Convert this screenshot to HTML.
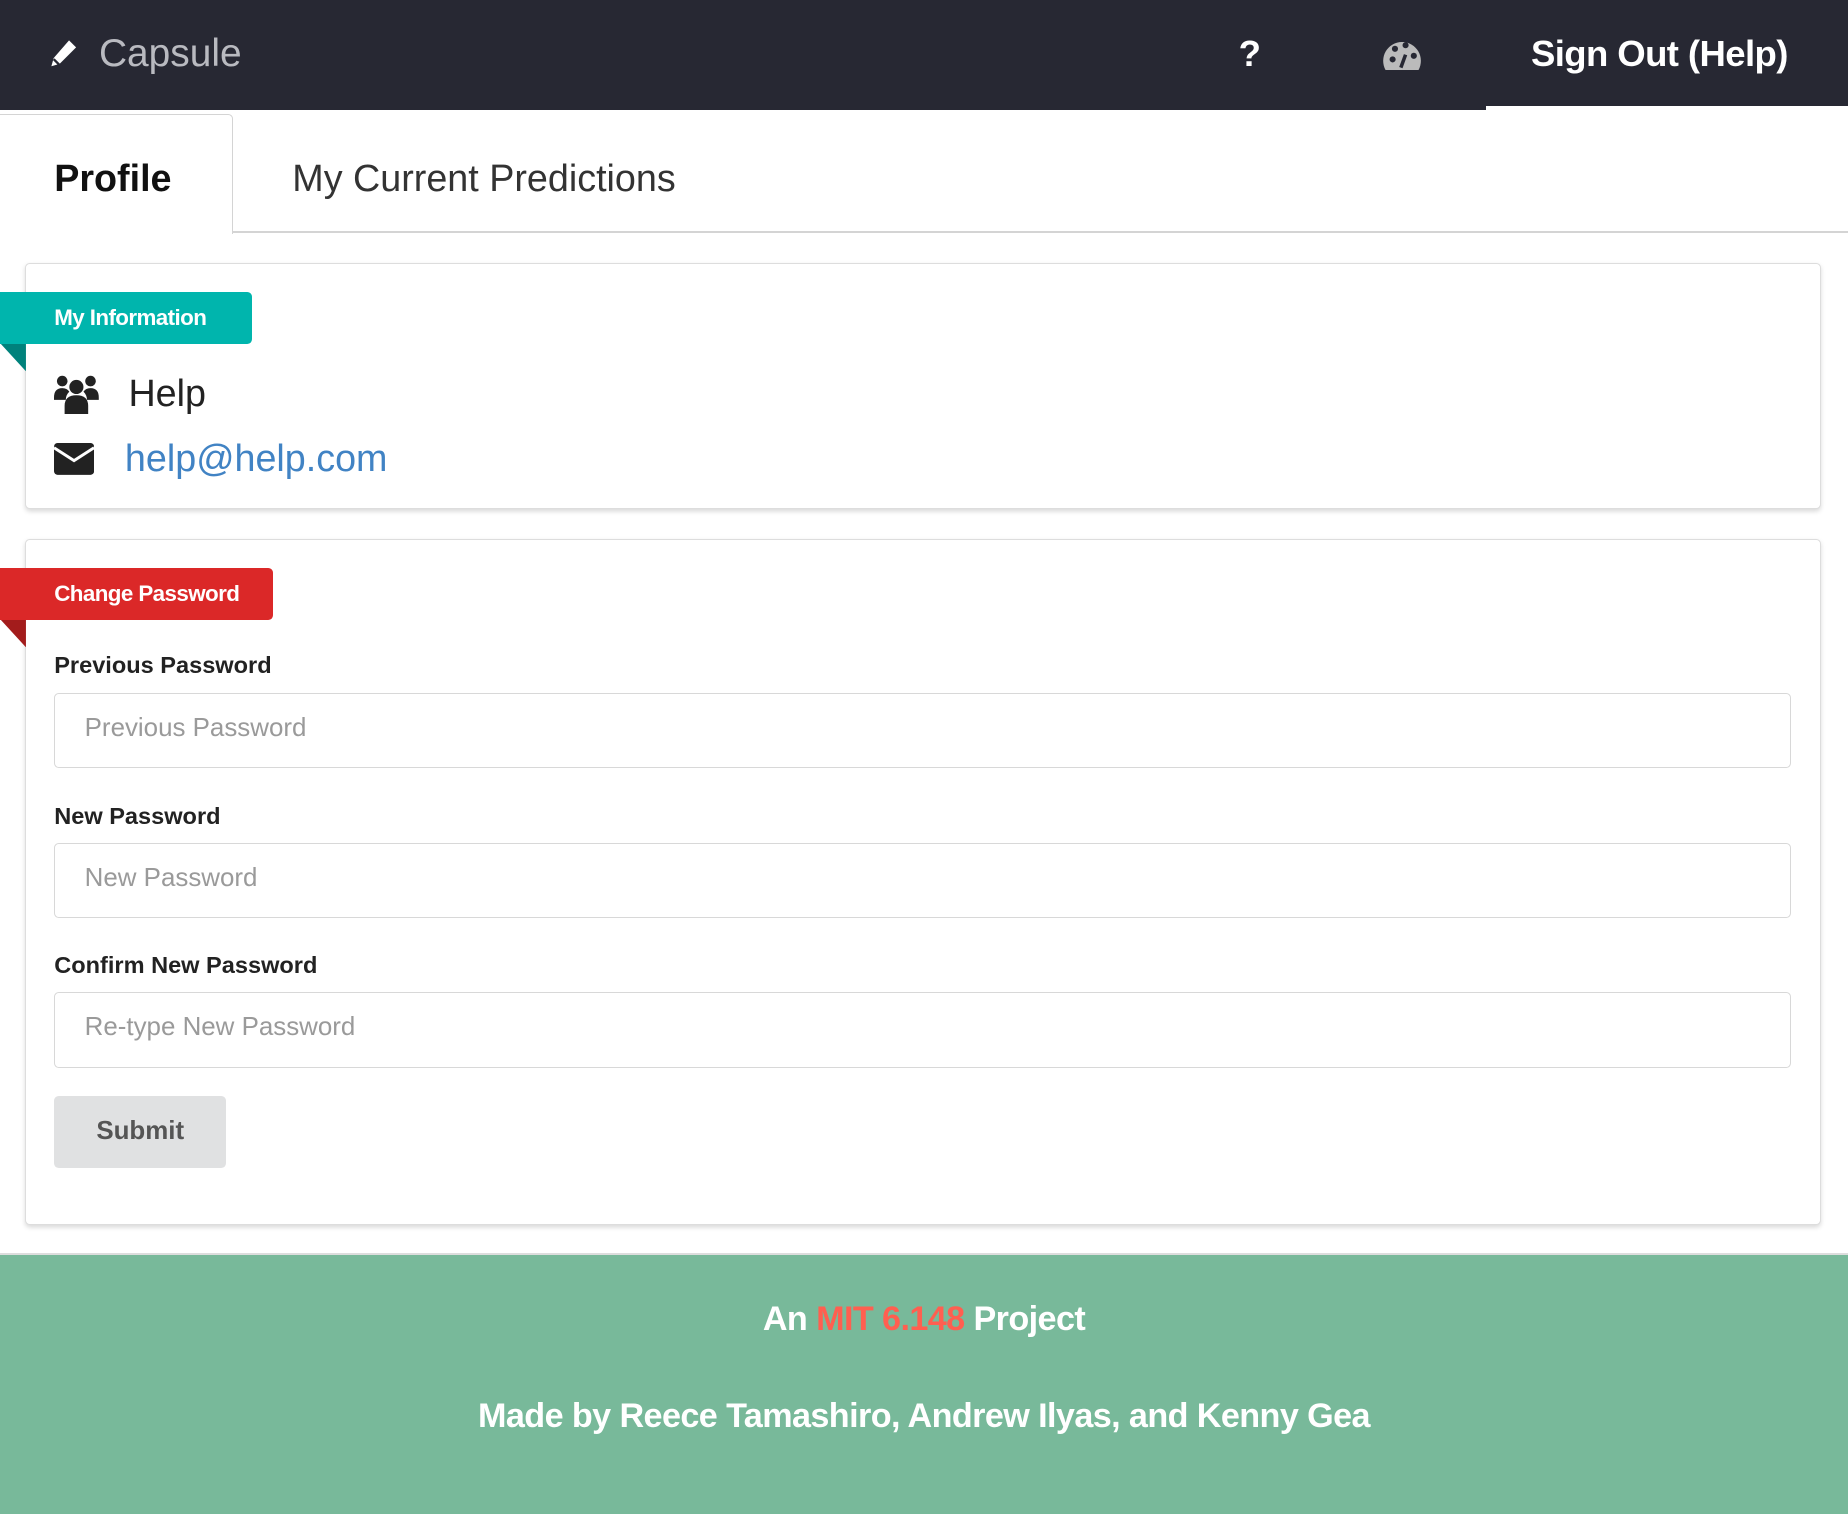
<!DOCTYPE html>
<html><head><meta charset="utf-8"><style>
html{zoom:1.17857}
body{margin:0;width:1568px;height:1285px;position:relative;background:#fff;font-family:"Liberation Sans",sans-serif;overflow:hidden;color:#222}
.a{position:absolute}
.nav{left:0;top:0;width:1568px;height:93px;background:#272833}
.lbl{font-weight:bold;font-size:20px;color:#222}
.inp{left:46px;border:1px solid #d8d8d8;border-radius:4px;box-sizing:border-box;width:1474px;height:64px}
.ph{position:absolute;left:25px;top:17px;font-size:22px;color:#9a9a9a}
.card{left:21px;width:1524px;border:1px solid #ddd;border-radius:4px;box-sizing:border-box;box-shadow:0 2px 4px rgba(0,0,0,.15);background:#fff}
</style></head><body>
<div class="a nav"></div>
<div class="a" style="left:1261px;top:90px;width:307px;height:5px;background:#fff"></div>
<svg class="a" style="left:42px;top:32px" width="26" height="28" viewBox="0 0 26 28"><path d="M17 2l6 6-14 14-7 2 2-7z" fill="#fff"/><path d="M4 18l5 5" stroke="#272833" stroke-width="2"/></svg>
<div class="a" style="left:84px;top:27px;font-size:33px;color:#b9bac0">Capsule</div>
<div class="a" style="left:1051px;top:28px;font-size:31px;font-weight:bold;color:#fff">?</div>
<svg class="a" style="left:1173px;top:31px" width="34" height="30" viewBox="0 0 34 30"><path d="M3 28A16 16 0 1 1 31 28Z" fill="#bbb"/><circle cx="9" cy="19" r="2.6" fill="#272833"/><circle cx="11" cy="10" r="2.6" fill="#272833"/><circle cx="20" cy="7" r="2.6" fill="#272833"/><circle cx="27" cy="16" r="2.6" fill="#272833"/><path d="M16 26l4-11" stroke="#272833" stroke-width="3"/></svg>
<div class="a" style="left:1299px;top:28px;font-size:31px;font-weight:bold;color:#fff;letter-spacing:-0.5px">Sign Out (Help)</div>

<div class="a" style="left:198px;top:196px;width:1370px;height:2px;background:#d4d4d4"></div>
<div class="a" style="left:0;top:97px;width:197px;height:101px;border:1px solid #d4d4d4;border-bottom:none;border-left:none;border-radius:0 4px 0 0;background:#fff"></div>
<div class="a" style="left:46px;top:133px;font-size:32px;font-weight:bold;color:#111">Profile</div>
<div class="a" style="left:248px;top:133px;font-size:32px;color:#333">My Current Predictions</div>

<div class="a card" style="top:223px;height:209px"></div>
<svg class="a" style="left:0;top:291px" width="22" height="24"><path d="M0 0H22V24Z" fill="#00827c"/></svg>
<div class="a" style="left:0;top:248px;width:214px;height:44px;background:#00b5ad;border-radius:0 4px 4px 0"></div>
<div class="a" style="left:46px;top:259px;font-size:19px;font-weight:bold;color:#fff;letter-spacing:-0.5px">My Information</div>
<svg class="a" style="left:46px;top:317px" width="38" height="34" viewBox="0 0 38 34"><circle cx="7" cy="6" r="4.5" fill="#222"/><circle cx="31" cy="6" r="4.5" fill="#222"/><path d="M0 20q0-8 7-8 4 0 6 3-3 3-3 7H0z" fill="#222"/><path d="M38 20q0-8-7-8-4 0-6 3 3 3 3 7h10z" fill="#222"/><circle cx="19" cy="11" r="6" fill="#222"/><path d="M9 34V27q0-9 10-9t10 9v7z" fill="#222"/></svg>
<div class="a" style="left:109px;top:316px;font-size:32px;color:#222">Help</div>
<svg class="a" style="left:46px;top:376px" width="34" height="27" viewBox="0 0 34 27"><rect x="0" y="0" width="34" height="27" rx="3" fill="#222"/><path d="M0 4l17 11 17-11" stroke="#fff" stroke-width="2.5" fill="none"/></svg>
<div class="a" style="left:106px;top:371px;font-size:32px;color:#4183c4">help@help.com</div>

<div class="a card" style="top:457px;height:582px"></div>
<svg class="a" style="left:0;top:525px" width="22" height="24"><path d="M0 0H22V24Z" fill="#a31c1c"/></svg>
<div class="a" style="left:0;top:482px;width:232px;height:44px;background:#db2828;border-radius:0 4px 4px 0"></div>
<div class="a" style="left:46px;top:493px;font-size:19px;font-weight:bold;color:#fff;letter-spacing:-0.5px">Change Password</div>

<div class="a lbl" style="left:46px;top:553px">Previous Password</div>
<div class="a inp" style="top:588px"><span class="ph">Previous Password</span></div>
<div class="a lbl" style="left:46px;top:681px">New Password</div>
<div class="a inp" style="top:715px"><span class="ph">New Password</span></div>
<div class="a lbl" style="left:46px;top:808px">Confirm New Password</div>
<div class="a inp" style="top:842px"><span class="ph">Re-type New Password</span></div>
<div class="a" style="left:46px;top:930px;width:146px;height:61px;background:#e0e1e2;border-radius:4px;color:#555;font-weight:bold;font-size:22px;text-align:center;line-height:61px">Submit</div>

<div class="a" style="left:0;top:1063px;width:1568px;height:2px;background:#ddd"></div>
<div class="a" style="left:0;top:1065px;width:1568px;height:220px;background:#78b99a"></div>
<div class="a" style="left:0;top:1103px;width:1568px;text-align:center;font-size:29px;font-weight:bold;color:#fff;letter-spacing:-0.5px">An <span style="color:#ff5f50">MIT 6.148</span> Project</div>
<div class="a" style="left:0;top:1185px;width:1568px;text-align:center;font-size:29px;font-weight:bold;color:#fff;letter-spacing:-0.5px">Made by Reece Tamashiro, Andrew Ilyas, and Kenny Gea</div>
</body></html>
